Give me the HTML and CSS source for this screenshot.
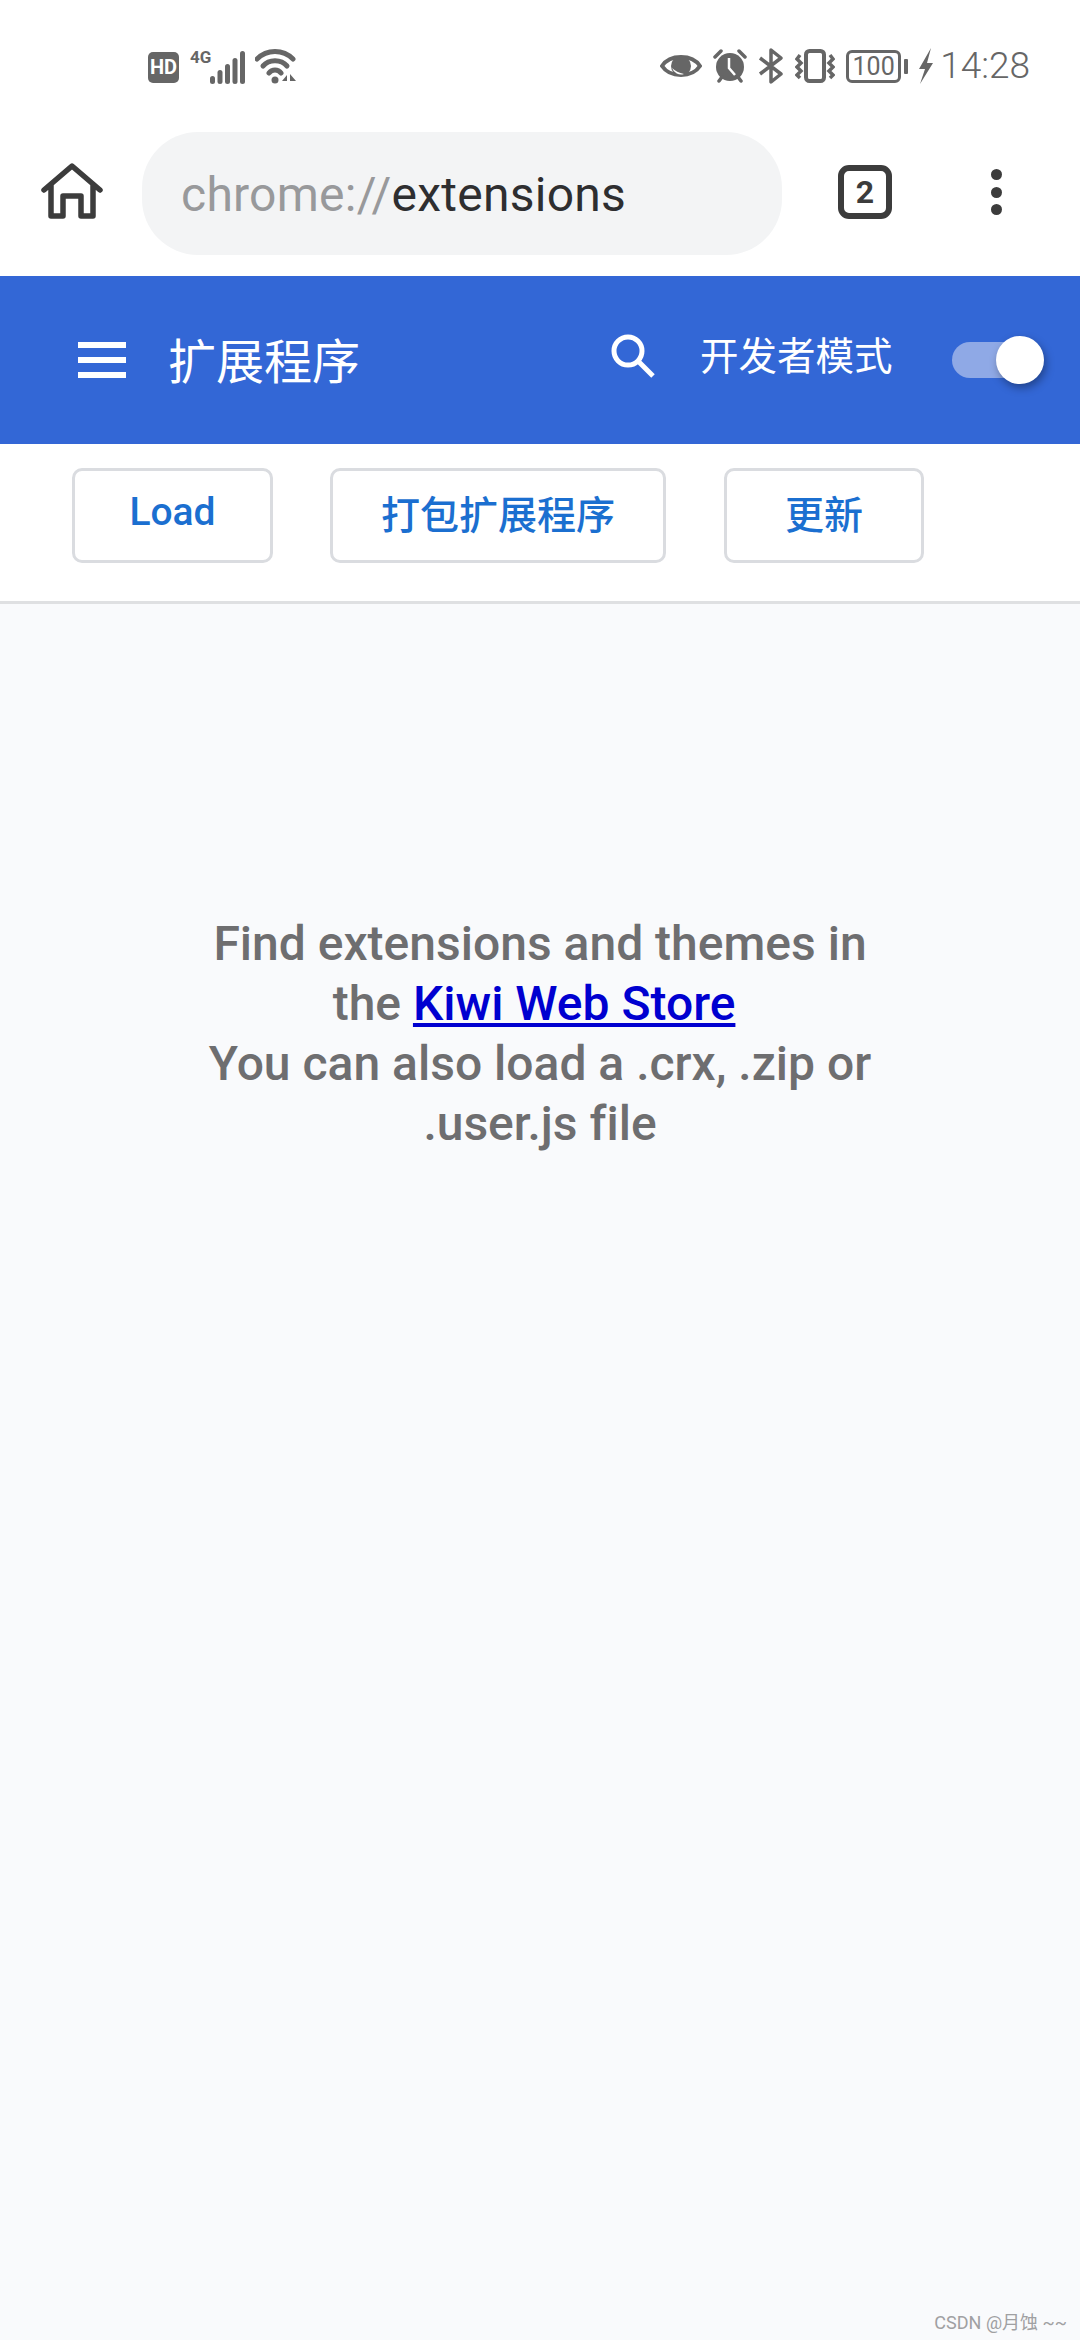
FILE: index.html
```html
<!DOCTYPE html>
<html lang="zh-CN">
  <head>
    <meta charset="UTF-8" />
    <meta name="viewport" content="width=device-width, initial-scale=1.0" />
    <title>chrome://extensions</title>
    <link rel="stylesheet" href="styles.css">
  </head>
  <body>
    <div class="status-bar">
      <div class="status-left">
        <span class="hd-badge">HD</span>
        <span class="net-label">4G</span>
        <svg class="signal-icon" width="35" height="33" viewBox="0 0 35 33">
          <g fill="#666">
            <rect x="0" y="25" width="5" height="8" rx="2.5" />
            <rect x="7.5" y="19" width="5" height="14" rx="2.5" />
            <rect x="15" y="13" width="5" height="20" rx="2.5" />
            <rect x="22.5" y="7" width="5" height="26" rx="2.5" />
            <rect x="30" y="0" width="5" height="33" rx="2.5" />
          </g>
        </svg>
        <svg class="wifi-icon" width="42" height="36" viewBox="0 0 42 36">
          <g fill="none" stroke="#666" stroke-width="5" stroke-linecap="round">
            <path d="M2 11C12 1 28 1 38 11" />
            <path d="M8 18C14 11 26 11 32 18" />
            <path d="M14 25C17 21 23 21 26 25" />
          </g>
          <circle cx="20" cy="32" r="3.5" fill="#666" />
          <path d="M27 33l5-6v6zM35 26l6 7h-6z" fill="#666" />
        </svg>
      </div>
      <div class="status-right">
        <svg width="42" height="28" viewBox="0 0 42 28">
          <path d="M2 14C10 2 32 2 40 14C32 26 10 26 2 14Z" fill="none" stroke="#666" stroke-width="4" />
          <circle cx="21" cy="14" r="10" fill="#666" />
          <path d="M12 16A9.500 9.500 0 0 0 24 22C19 21 15 19 12 16Z" fill="#fff" />
        </svg>
        <svg width="34" height="34" viewBox="0 0 34 34">
          <circle cx="17" cy="18" r="14" fill="#666" />
          <path d="M16 9v10l6 7" fill="none" stroke="#fff" stroke-width="2.500" />
          <path d="M2 8l6-6M32 8l-6-6M6 32l3-4M28 32l-3-4" stroke="#666" stroke-width="3.500" stroke-linecap="round" />
        </svg>
        <svg width="26" height="36" viewBox="0 0 26 36">
          <path d="M2 10L23 26L13 34V2L23 10L2 26" fill="none" stroke="#666" stroke-width="3.500" stroke-linejoin="round" />
        </svg>
        <svg width="40" height="34" viewBox="0 0 40 34">
          <rect x="11" y="2" width="18" height="30" rx="3.500" fill="none" stroke="#666" stroke-width="4" />
          <path d="M5 6L2 10L6 14L2 18L6 22L2 26L5 29M35 6L38 10L34 14L38 18L34 22L38 26L35 29" fill="none" stroke="#666" stroke-width="3.500" />
        </svg>
        <div class="battery">
          <span class="battery-body">100</span>
          <span class="battery-nub"></span>
        </div>
        <svg width="14" height="36" viewBox="0 0 14 36">
          <path d="M12 0L0 21H6L1 36L14 15H8Z" fill="#666" />
        </svg>
        <span class="clock">14:28</span>
      </div>
    </div>

    <div class="toolbar">
      <svg class="home-icon" width="62" height="56" viewBox="0 0 62 56">
        <path d="M3 27L31 3L59 27M10 22V53H22V33H40V53H52V22" fill="none" stroke="#3c3c3c" stroke-width="5.500" stroke-linejoin="round" stroke-linecap="round" />
      </svg>
      <div class="address-bar"><span class="scheme">chrome://</span>extensions</div>
      <div class="tab-count">2</div>
      <div class="more-dots"><i></i><i></i><i></i></div>
    </div>

    <div class="app-header">
      <div class="menu-icon"><i></i><i></i><i></i></div>
      <h1>扩展程序</h1>
      <svg class="search-icon" width="46" height="46" viewBox="0 0 46 46">
        <circle cx="18" cy="18" r="14" fill="none" stroke="#fff" stroke-width="5" />
        <path d="M28 28L43 43" stroke="#fff" stroke-width="5" />
      </svg>
      <span class="dev-label">开发者模式</span>
      <div class="toggle"><span class="toggle-knob"></span></div>
    </div>

    <div class="action-bar">
      <button class="action-btn btn-load">Load</button>
      <button class="action-btn btn-pack">打包扩展程序</button>
      <button class="action-btn btn-update">更新</button>
    </div>

    <div class="content">
      <p>Find extensions and themes in<br />the <a href="#">Kiwi Web Store</a>&nbsp;<br />You can also load a .crx, .zip or<br />.user.js file</p>
    </div>

    <div class="watermark">CSDN @月蚀 ~~</div>
  </body>
</html>
```

FILE: styles.css
```css
* {
  margin: 0;
  padding: 0;
  box-sizing: border-box;
}

body {
  font-family: Roboto, "Noto Sans CJK SC", sans-serif;
  width: 1080px;
  height: 2340px;
  display: flex;
  flex-direction: column;
  background-color: #fff;
  position: relative;
  overflow: hidden;
}

.status-bar {
  height: 90px;
  padding: 48px 50px 0 148px;
  display: flex;
  justify-content: space-between;
  align-items: flex-start;
  flex-shrink: 0;
}

.status-left,
.status-right {
  display: flex;
  align-items: center;
  height: 36px;
}

.hd-badge {
  width: 31px;
  height: 31px;
  background-color: #666;
  border-radius: 5px;
  color: #fff;
  font-size: 20px;
  font-weight: 700;
  line-height: 31px;
  text-align: center;
  margin-top: 3px;
}

.net-label {
  color: #666;
  font-size: 17px;
  font-weight: 700;
  margin: -18px 0 0 11px;
  width: 20px;
}

.signal-icon {
  margin: 2px 0 0 0;
}

.wifi-icon {
  margin-left: 10px;
}

.status-right {
  gap: 11px;
}

.battery {
  display: flex;
  align-items: center;
  gap: 3px;
}

.battery-body {
  width: 55px;
  height: 33px;
  border: 3px solid #666;
  border-radius: 6px;
  color: #666;
  font-size: 25px;
  line-height: 27px;
  text-align: center;
}

.battery-nub {
  width: 4px;
  height: 15px;
  background-color: #666;
  border-radius: 1px;
}

.clock {
  color: #666;
  font-size: 37px;
  font-weight: 300;
  line-height: 36px;
  margin-left: -4px;
}

.toolbar {
  height: 186px;
  display: flex;
  align-items: flex-start;
  flex-shrink: 0;
}

.home-icon {
  margin: 73px 0 0 41px;
}

.address-bar {
  width: 640px;
  height: 123px;
  margin: 42px 0 0 39px;
  padding: 3px 0 0 39px;
  background-color: #f3f4f5;
  border-radius: 56px;
  color: #2e2e30;
  font-size: 48px;
  letter-spacing: 0.25px;
  line-height: 120px;
}

.scheme {
  color: #98999b;
}

.tab-count {
  width: 54px;
  height: 54px;
  margin: 75px 0 0 56px;
  border: 6px solid #3c3c3c;
  border-radius: 11px;
  color: #3c3c3c;
  font-size: 32px;
  font-weight: 700;
  line-height: 42px;
  text-align: center;
}

.more-dots {
  width: 12px;
  height: 46px;
  margin: 79px 0 0 99px;
  display: flex;
  flex-direction: column;
  justify-content: space-between;
}

.more-dots i {
  width: 11px;
  height: 11px;
  border-radius: 50%;
  background-color: #3c3c3c;
}

.app-header {
  height: 168px;
  background-color: #3367d6;
  display: flex;
  align-items: center;
  color: #fff;
  flex-shrink: 0;
}

.menu-icon {
  width: 48px;
  height: 36px;
  margin: 0 0 0 78px;
  display: flex;
  flex-direction: column;
  justify-content: space-between;
}

.menu-icon i {
  height: 6px;
  background-color: #fff;
}

.app-header h1 {
  font-size: 48px;
  font-weight: 400;
  margin: -4px 2px 0 42px;
  width: 440px;
}

.search-icon {
  margin: -8px 0 0 0;
}

.dev-label {
  font-size: 38.500px;
  margin: -14px 0 0 44px;
  width: 252px;
}

.toggle {
  width: 91px;
  height: 36px;
  background-color: #8fa9e6;
  border-radius: 18px;
  position: relative;
}

.toggle-knob {
  position: absolute;
  top: -6px;
  right: -1px;
  width: 48px;
  height: 48px;
  background-color: #fff;
  border-radius: 50%;
  box-shadow: 2px 4px 8px rgba(0, 0, 0, 0.35);
}

.action-bar {
  height: 160px;
  padding: 24px 0 0 72px;
  display: flex;
  align-items: flex-start;
  border-bottom: 3px solid #dfe0e2;
  flex-shrink: 0;
}

.action-btn {
  height: 95px;
  background-color: #fff;
  border: 3px solid #dadce0;
  border-radius: 10px;
  color: #1b6fd0;
  font-family: Roboto, "Noto Sans CJK SC", sans-serif;
  font-size: 39px;
  font-weight: 500;
  padding-bottom: 8px;
}

.btn-load {
  width: 201px;
}

.btn-pack {
  width: 336px;
  margin-left: 57px;
}

.btn-update {
  width: 200px;
  margin-left: 58px;
}

.content {
  flex: 1;
  background-color: #f9fafc;
  padding-top: 310px;
  text-align: center;
  color: #6e6e70;
  font-size: 48px;
  font-weight: 500;
  font-variant-ligatures: none;
  line-height: 60px;
}

.content a {
  color: #0000d0;
}

.watermark {
  position: absolute;
  right: 13px;
  bottom: 5px;
  color: #a0a0a2;
  font-size: 18px;
  line-height: 24px;
}
```
